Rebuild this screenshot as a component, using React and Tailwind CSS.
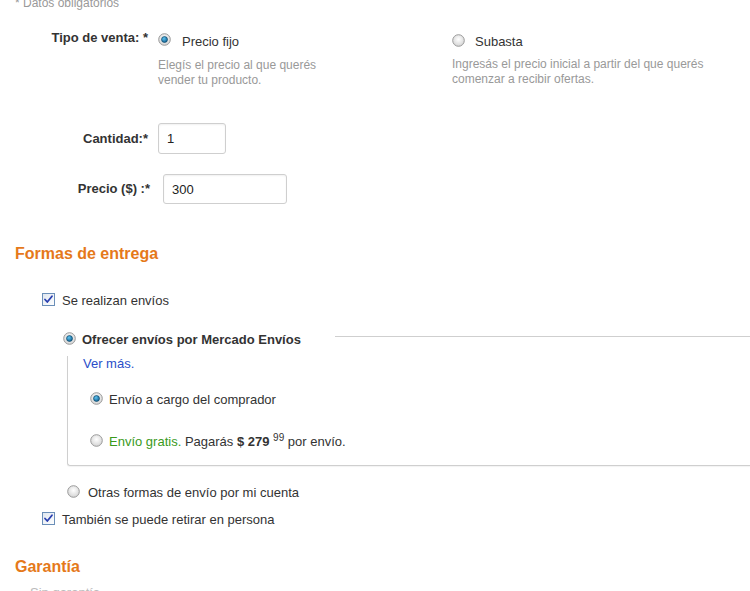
import React from 'react';

function Radio({ checked }) {
    return (
        <svg width="13" height="13" viewBox="0 0 13 13" className="shrink-0">
            <defs>
                <radialGradient id={checked ? 'rg-on' : 'rg-off'} cx="50%" cy="40%" r="60%">
                    <stop offset="0%" stopColor="#ffffff" />
                    <stop offset="100%" stopColor="#d4d4d4" />
                </radialGradient>
                <radialGradient id="dot" cx="40%" cy="35%" r="70%">
                    <stop offset="0%" stopColor="#5fc3f0" />
                    <stop offset="100%" stopColor="#0b5a8c" />
                </radialGradient>
            </defs>
            <circle cx="6.5" cy="6.5" r="5.8" fill={`url(#${checked ? 'rg-on' : 'rg-off'})`} stroke="#9a9a9a" strokeWidth="1" />
            {checked && <circle cx="6.5" cy="6.5" r="3" fill="url(#dot)" stroke="#06405f" strokeWidth="0.6" />}
        </svg>
    );
}

function Check() {
    return (
        <svg width="13" height="13" viewBox="0 0 13 13" className="shrink-0">
            <defs>
                <linearGradient id="cb" x1="0" y1="0" x2="1" y2="1">
                    <stop offset="0%" stopColor="#dfe6ef" />
                    <stop offset="100%" stopColor="#ffffff" />
                </linearGradient>
            </defs>
            <rect x="0.5" y="0.5" width="12" height="12" fill="url(#cb)" stroke="#6b8fb8" />
            <path d="M3 6.5 L5.3 9 L10 3.3" fill="none" stroke="#2a3fb0" strokeWidth="1.8" strokeLinecap="round" strokeLinejoin="round" />
        </svg>
    );
}

function Heading({ children, className }) {
    return (
        <h3 className={`pl-[15px] text-[16px] font-bold leading-[20px] text-[#e5791a] ${className}`}>{children}</h3>
    );
}

export default function App() {
    return (
        <div className="h-[591px] w-[750px] overflow-hidden bg-white font-['Liberation_Sans',Arial,sans-serif] text-[13px] text-[#333]">
            <div className="-mt-[4px] pl-[15px] text-[12px] leading-[14px] text-[#999]">* Datos obligatorios</div>

            {/* tipo de venta */}
            <div className="mt-[19px] flex items-start">
                <div className="w-[148px] text-right font-bold leading-[16px] pt-[1px]">Tipo de venta: *</div>
                <div className="ml-[10px] w-[294px]">
                    <div className="flex items-center">
                        <Radio checked />
                        <span className="ml-[11px] pt-[5px] leading-[16px]">Precio fijo</span>
                    </div>
                    <p className="mt-[8px] text-[12px] leading-[15px] text-[#999]">
                        Elegís el precio al que querés<br />vender tu producto.
                    </p>
                </div>
                <div>
                    <div className="flex items-center pt-[2px]">
                        <Radio />
                        <span className="ml-[10px] pt-[3px] leading-[16px]">Subasta</span>
                    </div>
                    <p className="mt-[7px] text-[12px] leading-[15px] text-[#999]">
                        Ingresás el precio inicial a partir del que querés<br />comenzar a recibir ofertas.
                    </p>
                </div>
            </div>

            {/* cantidad */}
            <div className="mt-[35px] flex items-center">
                <div className="w-[148px] text-right font-bold">Cantidad:*</div>
                <input
                    readOnly
                    value="1"
                    className="ml-[10px] h-[31px] w-[68px] rounded-[3px] border border-[#cfcfcf] px-[8px] text-[13px] text-[#222] shadow-[inset_0_1px_2px_rgba(0,0,0,0.06)] outline-none"
                />
            </div>

            {/* precio */}
            <div className="mt-[20px] flex items-center">
                <div className="w-[150px] text-right font-bold">Precio ($) :*</div>
                <input
                    readOnly
                    value="300"
                    className="ml-[13px] h-[30px] w-[124px] rounded-[3px] border border-[#cfcfcf] px-[8px] text-[13px] text-[#222] shadow-[inset_0_1px_2px_rgba(0,0,0,0.06)] outline-none"
                />
            </div>

            <Heading className="mt-[40px]">Formas de entrega</Heading>

            <div className="mt-[25px] flex items-center pl-[42px]">
                <Check />
                <span className="ml-[7px] pt-[4px] leading-[16px]">Se realizan envíos</span>
            </div>

            {/* mercado envios */}
            <div className="mt-[20px] ml-[62px]">
                <div className="flex items-start">
                    <div className="flex items-center pl-[1px]">
                        <Radio checked />
                        <span className="ml-[6px] pt-[3px] font-bold leading-[16px]">Ofrecer envíos por Mercado Envíos</span>
                    </div>
                    <div className="ml-[34px] mt-[7px] h-[1px] flex-1 bg-[#cfcfcf]" />
                </div>
                <div className="ml-[5px] rounded-bl-[3px] border-b border-l border-[#cfcfcf] pb-[15px] pl-[15px] shadow-[0_1px_1px_rgba(0,0,0,0.05)]">
                    <div className="mt-[8px] leading-[16px] text-[#2a4ec9]">Ver más.</div>
                    <div className="mt-[16px] flex items-center pl-[7px]">
                        <Radio checked />
                        <span className="ml-[6px] pt-[4px] leading-[16px]">Envío a cargo del comprador</span>
                    </div>
                    <div className="mt-[22px] flex items-center pl-[7px]">
                        <Radio />
                        <span className="ml-[6px] pt-[4px] leading-[16px]">
                            <span className="text-[#3a9a1c]">Envío gratis.</span> Pagarás{' '}
                            <span className="font-bold">$ 279</span>{' '}
                            <span className="relative -top-[5px] text-[10px] leading-none">99</span> por envío.
                        </span>
                    </div>
                </div>
            </div>

            <div className="mt-[15px] flex items-center pl-[67px]">
                <Radio />
                <span className="ml-[8px] pt-[4px] leading-[16px]">Otras formas de envío por mi cuenta</span>
            </div>
            <div className="mt-[7px] flex items-center pl-[42px]">
                <Check />
                <span className="ml-[7px] pt-[4px] leading-[16px]">También se puede retirar en persona</span>
            </div>

            <Heading className="mt-[29px]">Garantía</Heading>
            <div className="mt-[6px] pl-[30px] text-[13px] text-[#bbb]">Sin garantía</div>
        </div>
    );
}
